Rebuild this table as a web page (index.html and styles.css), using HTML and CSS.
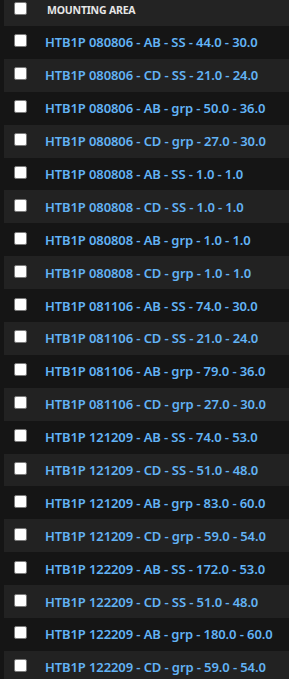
FILE: index.html
```html
<!DOCTYPE html>
<html lang="en">
<head>
    <meta charset="UTF-8">
    <meta name="viewport" content="width=device-width, initial-scale=1.0">
    <title>Mounting Area</title>
    <link rel="stylesheet" href="styles.css">
</head>
<body>
    <div class="grid">
        <div class="row head">
            <input type="checkbox" class="check">
            <span class="title">MOUNTING AREA</span>
        </div>
        <div class="row"><input type="checkbox" class="check"><a class="item">HTB1P 080806 - AB - SS - 44.0 - 30.0</a></div>
        <div class="row"><input type="checkbox" class="check"><a class="item">HTB1P 080806 - CD - SS - 21.0 - 24.0</a></div>
        <div class="row"><input type="checkbox" class="check"><a class="item">HTB1P 080806 - AB - grp - 50.0 - 36.0</a></div>
        <div class="row"><input type="checkbox" class="check"><a class="item">HTB1P 080806 - CD - grp - 27.0 - 30.0</a></div>
        <div class="row"><input type="checkbox" class="check"><a class="item">HTB1P 080808 - AB - SS - 1.0 - 1.0</a></div>
        <div class="row"><input type="checkbox" class="check"><a class="item">HTB1P 080808 - CD - SS - 1.0 - 1.0</a></div>
        <div class="row"><input type="checkbox" class="check"><a class="item">HTB1P 080808 - AB - grp - 1.0 - 1.0</a></div>
        <div class="row"><input type="checkbox" class="check"><a class="item">HTB1P 080808 - CD - grp - 1.0 - 1.0</a></div>
        <div class="row"><input type="checkbox" class="check"><a class="item">HTB1P 081106 - AB - SS - 74.0 - 30.0</a></div>
        <div class="row"><input type="checkbox" class="check"><a class="item">HTB1P 081106 - CD - SS - 21.0 - 24.0</a></div>
        <div class="row"><input type="checkbox" class="check"><a class="item">HTB1P 081106 - AB - grp - 79.0 - 36.0</a></div>
        <div class="row"><input type="checkbox" class="check"><a class="item">HTB1P 081106 - CD - grp - 27.0 - 30.0</a></div>
        <div class="row"><input type="checkbox" class="check"><a class="item">HTB1P 121209 - AB - SS - 74.0 - 53.0</a></div>
        <div class="row"><input type="checkbox" class="check"><a class="item">HTB1P 121209 - CD - SS - 51.0 - 48.0</a></div>
        <div class="row"><input type="checkbox" class="check"><a class="item">HTB1P 121209 - AB - grp - 83.0 - 60.0</a></div>
        <div class="row"><input type="checkbox" class="check"><a class="item">HTB1P 121209 - CD - grp - 59.0 - 54.0</a></div>
        <div class="row"><input type="checkbox" class="check"><a class="item">HTB1P 122209 - AB - SS - 172.0 - 53.0</a></div>
        <div class="row"><input type="checkbox" class="check"><a class="item">HTB1P 122209 - CD - SS - 51.0 - 48.0</a></div>
        <div class="row"><input type="checkbox" class="check"><a class="item">HTB1P 122209 - AB - grp - 180.0 - 60.0</a></div>
        <div class="row"><input type="checkbox" class="check"><a class="item">HTB1P 122209 - CD - grp - 59.0 - 54.0</a></div>
    </div>
</body>
</html>
```

FILE: styles.css
```css
body {
    margin: 0;
    background: #151515;
    font-family: 'Noto Sans', sans-serif;
    overflow: hidden;
}

.grid {
    margin-left: 4px;
}

.row {
    display: flex;
    align-items: center;
    height: 32.9px;
    padding-left: 10px;
}

.row:nth-child(odd) {
    background: #222222;
}

/* header is scrolled partly out of view */
.row.head {
    height: 26px;
    background: #232323;
}

.head .check {
    margin-bottom: 9px;
}

.check {
    appearance: none;
    -webkit-appearance: none;
    width: 13px;
    height: 13px;
    margin: 0 18px 3px 0;
    background: #fff;
    border: 1px solid #7a7a7a;
    border-radius: 2px;
    flex-shrink: 0;
}

.title {
    color: #e6e6e6;
    font-size: 10.5px;
    font-weight: 700;
    margin: 0 0 6px 2px;
    letter-spacing: -0.2px;
}

.item {
    color: #62b3f5;
    font-size: 13px;
    font-weight: 600;
    letter-spacing: -0.1px;
    white-space: nowrap;
    cursor: pointer;
}
```
